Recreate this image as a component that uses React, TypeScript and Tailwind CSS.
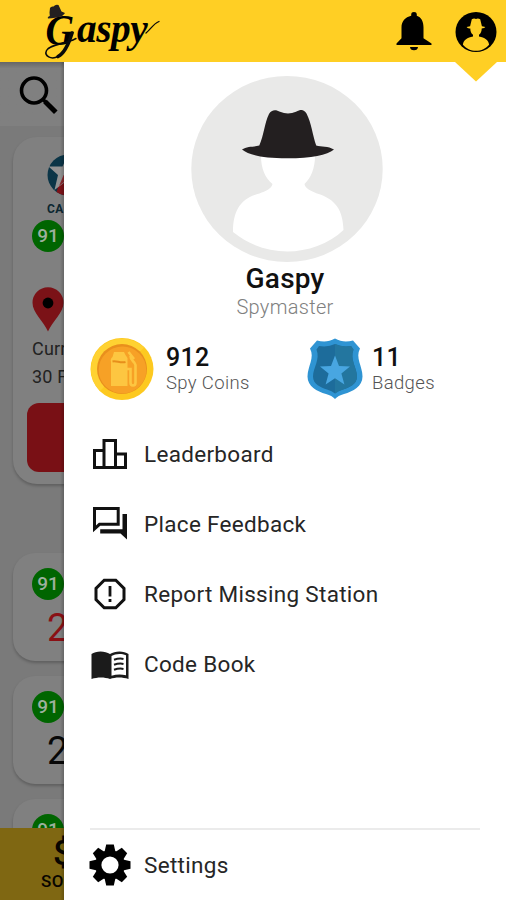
import type { ReactNode } from "react";

function BellIcon() {
  return (
    <svg viewBox="0 0 36 40" className="h-10 w-9" fill="#000">
      <path d="M15.200 3.600C15.200 1.800 16.300 1 18 1s2.800.8 2.800 2.600v1.200c4.400 1.400 6.700 5.600 6.700 11.600v10.800l8 5.300V34H.5v-1.500l5-5.300V16.400c0-6 3.700-10.200 9.700-11.600z" />
      <path d="M14 36h8c0 2-1.600 3.300-4 3.300S14 38 14 36z" />
    </svg>
  );
}

function AccountIcon() {
  return (
    <svg viewBox="0 0 42 42" className="mt-0.5 h-[42px] w-[42px]">
      <ellipse cx="21" cy="21" rx="20.500" ry="20" fill="#000" />
      <path
        d="M16.800 8.300q2-1.400 4.200-.4 2.200-1 4.200.4l1.700 6.900 3.400.9q-.5 1.400-3.600 1.500c0 3-1 5-2.700 6.200v1.600c5.600 1 9.500 3.400 10.100 8.300-3 3.800-8 6.100-13.100 6.100s-10.100-2.300-13.100-6.100c.6-4.900 4.500-7.300 10.100-8.300v-1.600c-1.700-1.200-2.700-3.200-2.700-6.200-3.100-.1-3.600-1.500-3.600-1.500l3.400-.9z"
        fill="#ffcf24"
      />
    </svg>
  );
}

function Logo() {
  return (
    <div className="relative h-[62px] w-[120px]">
      <div className="flex h-full items-start font-['Liberation_Serif',serif] font-bold italic text-black">
        <span className="w-[35px] origin-left scale-x-[0.88] pt-[8px] pl-[4px] text-[45px] leading-[45px]">G</span>
        <span className="origin-left scale-x-[0.96] pt-[6px] text-[41px] leading-[45px] tracking-[-0.5px]">aspy</span>
      </div>
      <svg viewBox="0 0 120 62" className="absolute inset-0 h-full w-full" fill="none" stroke="#0a0a0a" strokeLinecap="round">
        <path d="M7.500 12.500 8 8q1-2 3.500-1.500 2-2.500 5-1.500l3 6.500 3.500 1.500q-2 3.500-8 4.500T6 18.500q-1-1.500 1.800-2.500z" fill="#231f20" stroke="none" />
        <path d="M30 33c-3 10-7 20-14 23.500" strokeWidth="3.600" />
        <path d="M16 56.500C9 60 2 56 4.500 50.500 8 44 22 45 34 38.500" strokeWidth="1.500" />
        <path d="M104 33c5-4 7-9 13-11.500" strokeWidth="1.300" />
      </svg>
    </div>
  );
}

function Octane() {
  return (
    <div className="flex h-8 w-8 shrink-0 items-center justify-center rounded-full bg-[#006500] text-[19px] font-medium text-[#9db09d]">
      91
    </div>
  );
}

function PriceCard({ price, color }: { price: string; color: string }) {
  return (
    <div className="ml-[13px] h-[108px] w-[480px] shrink-0 rounded-[22px] bg-[#808080] pt-[15px] pl-[19px] shadow-[0_2px_3px_rgba(0,0,0,0.22)]">
      <Octane />
      <div className={`mt-[5px] pl-[15px] text-[38px] leading-[46px] ${color}`}>{price}</div>
    </div>
  );
}

function Background() {
  return (
    <div className="relative flex w-16 shrink-0 flex-col overflow-hidden bg-[#7a7a7a]">
      <div className="h-16 shrink-0 bg-[#808080] bg-linear-to-b from-[#666] to-[#808080] to-10% pt-2 pl-[13px]">
        <svg viewBox="0 0 51 51" className="h-[51px] w-[51px]" fill="none" stroke="#000">
          <circle cx="21" cy="20.500" r="12.500" strokeWidth="3.600" />
          <path d="m30 29.500 3 3" strokeWidth="3.600" />
          <path d="m32 31.500 10.800 10.800" strokeWidth="5" />
        </svg>
      </div>

      <div className="flex min-h-0 flex-1 flex-col overflow-hidden">
        <div className="mt-[11px] ml-[13px] h-[347px] w-[480px] shrink-0 rounded-[24px] bg-[#808080] pt-[17px] shadow-[0_2px_3px_rgba(0,0,0,0.22)]">
          <div className="pl-[34px]">
            <svg viewBox="0 0 42 42" className="h-[42px] w-[42px]">
              <circle cx="21" cy="21" r="20.500" fill="#0b3547" />
              <path d="M12 30 9.500 38a20.500 20.500 0 0 0 16 3L21 25z" fill="#7d1218" />
              <path d="m21 .5-5.500 12H1.500l9.500 8.500L7.500 36l11-8.500 8.500 3V12z" fill="#929292" />
              <path d="m20 13-8 19 9-7z" fill="#8b2a2f" />
            </svg>
            <div className="text-[12px] font-bold leading-[26px] tracking-[0.5px] text-[#0b2630]">CALTEX</div>
          </div>
          <div className="-mt-[2px] pl-[19px]">
            <Octane />
            <svg viewBox="0 0 32 45" className="mt-[35px] h-[45px] w-8">
              <path d="M16 44.500C11.500 34 .5 26 .5 15.700a15.500 15.500 0 0 1 31 0C31.500 26 20.500 34 16 44.500z" fill="#7b1217" />
              <circle cx="16" cy="16" r="5.400" fill="#000" />
            </svg>
            <div className="mt-[3px] text-[18px] leading-7 tracking-[0.2px] text-[#222]">Current</div>
            <div className="text-[18px] leading-7 tracking-[0.2px] text-[#222]">30 Forest</div>
          </div>
          <div className="mt-[12px] ml-[14px] h-[69px] w-[440px] rounded-xl bg-[#791015]" />
        </div>

        <div className="mt-[69px] flex flex-col gap-[15px]">
          <PriceCard price="2.07" color="text-[#8a1015]" />
          <PriceCard price="2.09" color="text-[#080808]" />
          <PriceCard price="2.11" color="text-[#080808]" />
        </div>
      </div>

      <div className="h-[72px] w-[506px] shrink-0 bg-[#7f6712] font-medium text-[#080500]">
        <div className="pt-[8px] pl-[53px] text-[35px] leading-[36px]">$</div>
        <div className="pl-[41px] text-[17px] leading-[18px] tracking-[0.5px]">SORT</div>
      </div>
      <div className="absolute inset-y-0 right-0 w-[4px] bg-linear-to-r from-transparent to-black/20" />
    </div>
  );
}

function Avatar() {
  return (
    <svg viewBox="0 0 192 186" className="ml-[3px] h-[186px] w-48">
      <ellipse cx="96" cy="93" rx="95.700" ry="93" fill="#e9e9e8" />
      <path
        d="M70 80c0 12 4 22 11.500 28-1 5-7 7-13 9.500-19 5-26.500 17-26.500 38.500 16 13 35 19.500 54.500 19.500S138 168 152.500 154c-.5-20-8-31-26.500-36.500-6-2.500-12-5-12.500-9.500C120 102 124 92 124 80z"
        fill="#fff"
      />
      <path
        d="M68.300 69.500C73 59 73.500 47 78 38c2.500-4.500 7-4.500 11-2.200q8 3.500 16 0c5-3 8-2.500 10.500 1.800 5 9.400 6 21.400 9.700 31.900 5 1.500 12 .5 17.800 4-7 5.500-22 8.800-47 8.800s-38-3.300-45-8.800c5-3.500 12-2.500 17.300-4z"
        fill="#231f20"
      />
    </svg>
  );
}

function CoinIcon() {
  return (
    <svg viewBox="0 0 64 62" className="h-[62px] w-16">
      <ellipse cx="32" cy="31" rx="31.500" ry="31" fill="#fdc920" />
      <path d="M10 9.500A31.500 31 0 0 1 54 9.500L10 53A31.500 31 0 0 1 10 9.500z" fill="#ffd232" />
      <circle cx="32" cy="31" r="25" fill="#e98f1d" />
      <ellipse cx="32.500" cy="32" rx="23.800" ry="23.500" fill="#f7a126" />
      <path d="M21 24q-1-3 1.500-5l1.500-5h10l1.500 3 2 3v28H21z" fill="#fdc641" />
      <path d="M22.500 23.500c4-1 8 2 13 .5" fill="none" stroke="#e78f1b" strokeWidth="2" />
      <path d="M37 31h3.500v13.500c0 4 5 4 5 0V27c-1-4-5-4-5-9" fill="none" stroke="#fdc641" strokeWidth="2.600" />
      <path d="m38.500 14 5.500 7" stroke="#fdc641" strokeWidth="2.600" />
    </svg>
  );
}

function ShieldIcon() {
  return (
    <svg viewBox="0 0 56 62" className="h-[62px] w-14">
      <path
        d="M10 2.500c6 1.500 12 1.500 18-2 6 3.500 12 3.500 18 2l7 8c-5 9 2.500 18 2.500 28S46 53.500 37 56q-6 1.500-9 5-3-3.500-9-5C10 53.500.5 48.500.5 38.500S8 19.500 3 10.500z"
        fill="#2f94d3"
      />
      <path d="M12 8q9 1.500 16-2 7 3.500 16 2l2.500 3.500c-4 10 3.500 18 3.500 27 0 8-8 11-14 13q-5 1.500-8 4-3-2.500-8-4c-6-2-14-5-14-13 0-9 7.500-17 3.500-27z" fill="#1d6c9b" />
      <path d="M28 6q7 3.500 16 2l2.500 3.500c-4 10 3.500 18 3.500 27 0 8-8 11-14 13q-5 1.500-8 4z" fill="#23769f" />
      <path d="m28 17.500 4 10.500 11 .5-8.600 7 3 11L28 40.300l-9.400 6.200 3-11-8.600-7 11-.5z" fill="#48a6e1" />
    </svg>
  );
}

function LeaderboardIcon() {
  return (
    <svg viewBox="0 0 40 40" className="h-10 w-10" fill="none" stroke="#111" strokeWidth="3">
      <path d="M14 16.500H4.500v17h31v-13.500H25.500M14 33.500v-27h11.500v27" />
    </svg>
  );
}

function FeedbackIcon() {
  return (
    <svg viewBox="0 0 40 40" className="h-10 w-10">
      <path d="M4.500 4.500h23.700v15.800H9.500l-5 4.500z" fill="none" stroke="#111" strokeWidth="3" />
      <path d="M32.500 10H37v25.500l-6.500-6H10.200v-4.200h22.300z" fill="#111" />
    </svg>
  );
}

function ReportIcon() {
  return (
    <svg viewBox="0 0 40 40" className="h-10 w-10" fill="none" stroke="#111">
      <path d="M14.200 6.300h11.600l8.200 8.100v11.200l-8.200 8.100H14.200L6 25.600V14.400z" strokeWidth="3" />
      <path d="M20 12v10.500M20 25v3" strokeWidth="2.800" />
    </svg>
  );
}

function BookIcon() {
  return (
    <svg viewBox="0 0 40 40" className="h-10 w-10">
      <path d="M1.500 10C6 6.500 15 6.500 20 10c5-3.500 14-3.500 18.500 0v25c-6-2-13-2-18.500 0-5.500-2-12.500-2-18.500 0z" fill="#1b1b1b" />
      <path d="M21.500 12c4-2.500 10-2.700 14.500-.7v19.900c-5-1.200-10-1-14.500.6z" fill="#fff" />
      <path d="M24 15.800q5-1.800 9.500-.9M24 20.800q5-1.800 9.500-.9M24 25.800q5-1.800 9.500-.9" fill="none" stroke="#1b1b1b" strokeWidth="2" />
    </svg>
  );
}

function GearIcon() {
  return (
    <svg viewBox="-21 -21 42 42" className="h-[42px] w-[42px] shrink-0" fill="#000">
      {[0, 45, 90, 135].map((deg) => (
        <path key={deg} transform={`rotate(${deg})`} d="M-3.800-20.500h7.600L5.500-13v26l-1.700 7.500h-7.600L-5.500 13v-26z" />
      ))}
      <circle r="14.800" />
      <circle r="8.600" fill="#fff" />
    </svg>
  );
}

function MenuRow({ icon, label }: { icon: ReactNode; label: string }) {
  return (
    <div className="flex h-[70px] items-center gap-[14px] pl-[26px]">
      <div className="flex w-10 shrink-0 justify-center">{icon}</div>
      <span className="pt-0.5 text-[22.500px] tracking-[0.3px] text-[#262626]">{label}</span>
    </div>
  );
}

function Stat({ value, label }: { value: string; label: string }) {
  return (
    <div className="pt-[3px]">
      <div className="text-[25px] font-medium leading-[26px] tracking-[0.3px] text-[#111]">{value}</div>
      <div className="text-[18.500px] font-light leading-[25px] tracking-[0.35px] text-[#555]">{label}</div>
    </div>
  );
}

function Drawer() {
  return (
    <aside className="relative flex flex-1 flex-col bg-white">
      <svg viewBox="0 0 42 20" className="absolute top-0 right-[9px] h-5 w-[42px]">
        <path d="M0 0h42L21 19.500z" fill="#ffcf24" />
      </svg>

      <div className="flex flex-col items-center pt-[14px]">
        <Avatar />
        <h1 className="pt-px text-[28px] font-medium leading-[31px] tracking-[0.2px] text-[#111]">Gaspy</h1>
        <p className="text-[20px] font-light leading-[27px] tracking-[0.3px] text-[#808080]">Spymaster</p>
      </div>

      <div className="mt-[17px] flex h-[62px] items-center pl-[26px]">
        <div className="flex w-[217px] items-center gap-3">
          <CoinIcon />
          <Stat value="912" label="Spy Coins" />
        </div>
        <div className="flex items-center gap-[9px]">
          <ShieldIcon />
          <Stat value="11" label="Badges" />
        </div>
      </div>

      <nav className="mt-[19px]">
        <MenuRow icon={<LeaderboardIcon />} label="Leaderboard" />
        <MenuRow icon={<FeedbackIcon />} label="Place Feedback" />
        <MenuRow icon={<ReportIcon />} label="Report Missing Station" />
        <MenuRow icon={<BookIcon />} label="Code Book" />
      </nav>

      <div className="mt-auto">
        <div className="mr-[26px] ml-[26px] h-0.5 bg-[#ebebeb]" />
        <MenuRow icon={<GearIcon />} label="Settings" />
      </div>
    </aside>
  );
}

export default function App() {
  return (
    <div className="flex h-[900px] w-[506px] flex-col overflow-hidden font-[Roboto,sans-serif]">
      <header className="flex h-[62px] shrink-0 items-center bg-[#ffcf24] pr-[9px] pl-[42px]">
        <Logo />
        <div className="ml-auto flex items-center gap-[23px]">
          <BellIcon />
          <AccountIcon />
        </div>
      </header>
      <div className="flex min-h-0 flex-1">
        <Background />
        <Drawer />
      </div>
    </div>
  );
}
